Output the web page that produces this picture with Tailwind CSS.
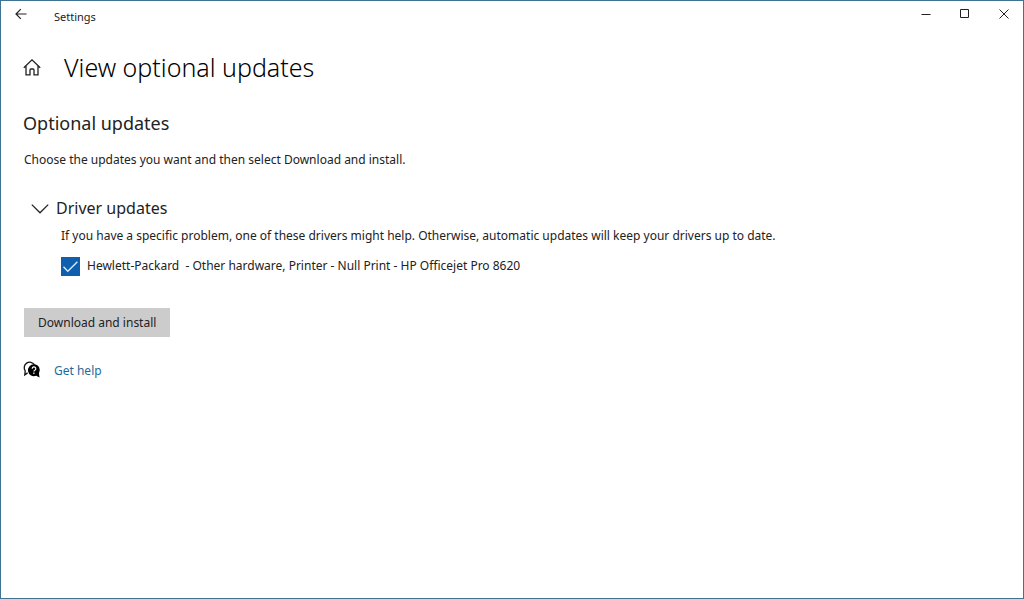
<!DOCTYPE html>
<html lang="en">

<head>
    <meta charset="UTF-8">
    <meta name="viewport" content="width=device-width, initial-scale=1.0">
    <title>Settings</title>
    <!-- tailwind css -->
    <script src="https://cdn.jsdelivr.net/npm/@tailwindcss/browser@4"></script>
</head>

<body class="min-h-screen bg-white border border-[#3f7391] text-[#222222] text-[12px] leading-5 font-['Noto_Sans','Open_Sans',sans-serif]">
    <header class="flex justify-between items-start">
        <div class="flex items-start">
            <button type="button" aria-label="Back" class="pl-[14px] pr-3 pt-[7px]">
                <svg class="w-3 h-3" viewBox="0 0 12 12" fill="none" stroke="#222" stroke-width="1.2">
                    <path d="M11.5 6H1.2M5.8 1.2L1 6l4.8 4.8" />
                </svg>
            </button>
            <span class="pt-[6px] pl-[15px] text-[11px]">Settings</span>
        </div>
        <div class="flex">
            <button type="button" aria-label="Minimize" class="w-[39px] h-[26px] flex items-center justify-center">
                <svg class="w-[10px] h-[10px]" viewBox="0 0 10 10" stroke="#222">
                    <path d="M0.5 5.5h9" />
                </svg>
            </button>
            <button type="button" aria-label="Maximize" class="w-[39px] h-[26px] flex items-center justify-center">
                <svg class="w-[10px] h-[10px]" viewBox="0 0 10 10" fill="none" stroke="#222">
                    <path d="M0.5 0.5h8v8h-8z" />
                </svg>
            </button>
            <button type="button" aria-label="Close" class="w-[39px] h-[26px] flex items-center justify-center">
                <svg class="w-[10px] h-[10px]" viewBox="0 0 10 10" stroke="#222">
                    <path d="M0.5 0.5l9 9M9.5 0.5l-9 9" />
                </svg>
            </button>
        </div>
    </header>

    <main class="px-[22px]">
        <div class="flex items-center mt-5">
            <button type="button" aria-label="Home">
                <svg class="w-[18px] h-[18px]" viewBox="0 0 18 18" fill="none" stroke="#222" stroke-width="1.3">
                    <path d="M0.8 9.8L9 1.9l8.2 7.9M3 8v8.900h4v-4.900q0-1 1-1h2q1 0 1 1v4.900h4V8" />
                </svg>
            </button>
            <h1 class="ml-[23px] text-[25px] leading-10 font-light text-black">View optional updates</h1>
        </div>

        <h2 class="mt-[22px] text-[18px] leading-7">Optional updates</h2>
        <p class="mt-[13px] pl-px">Choose the updates you want and then select Download and install.</p>

        <section class="mt-[26px] pl-2">
            <h3 class="text-[16px] leading-6">
                <button type="button" aria-expanded="true" class="flex items-center">
                    <svg class="w-[18px] h-3 mr-[7px]" viewBox="0 0 18 12" fill="none" stroke="#222" stroke-width="1.3">
                        <path d="M0.8 2.600L9 10.800l8.200-8.200" />
                    </svg>
                    Driver updates
                </button>
            </h3>
            <div class="pl-[30px]">
                <p class="mt-[6px]">If you have a specific problem, one of these drivers might help. Otherwise, automatic updates will keep your drivers up to date.</p>
                <div class="mt-[10px] flex items-center">
                    <span class="relative flex">
                        <input type="checkbox" id="driver" checked class="peer appearance-none w-[19px] h-[19px] border border-[#0f5fae] checked:bg-[#0f5fae]">
                        <svg class="absolute inset-0 w-[19px] h-[19px] pointer-events-none hidden peer-checked:block" viewBox="0 0 19 19" fill="none" stroke="#d3ecff" stroke-width="1.4">
                            <path d="M2.5 9.8l4.3 4.4 9.6-9.4" />
                        </svg>
                    </span>
                    <label for="driver" class="pl-[7px] whitespace-pre">Hewlett-Packard  - Other hardware, Printer - Null Print - HP Officejet Pro 8620</label>
                </div>
            </div>
        </section>

        <button type="button" class="block mt-8 ml-px h-[29px] px-[14px] bg-[#cccccc]">Download and install</button>

        <div class="mt-6 flex items-start">
            <svg class="w-[18px] h-[18px]" viewBox="0 0 18 18">
                <path d="M4.600 11.900L1.800 13.900L2.200 9.900A5.400 5.400 0 1 1 11.400 3.600" fill="none" stroke="#111" stroke-width="1.3" />
                <path d="M10.900 3.200a6 6 0 0 1 5 9.200l.7 4.100-3.500-1.700a6 6 0 1 1-2.200-11.600z" fill="#000" />
                <path d="M9.200 7.700a1.800 1.800 0 1 1 2.600 1.500q-.9.400-.9 1.300M10.900 11.600v1.300" fill="none" stroke="#fff" stroke-width="1.2" />
            </svg>
            <a href="#" class="ml-[13px] text-[#1f6a99]">Get help</a>
        </div>
    </main>
</body>

</html>
